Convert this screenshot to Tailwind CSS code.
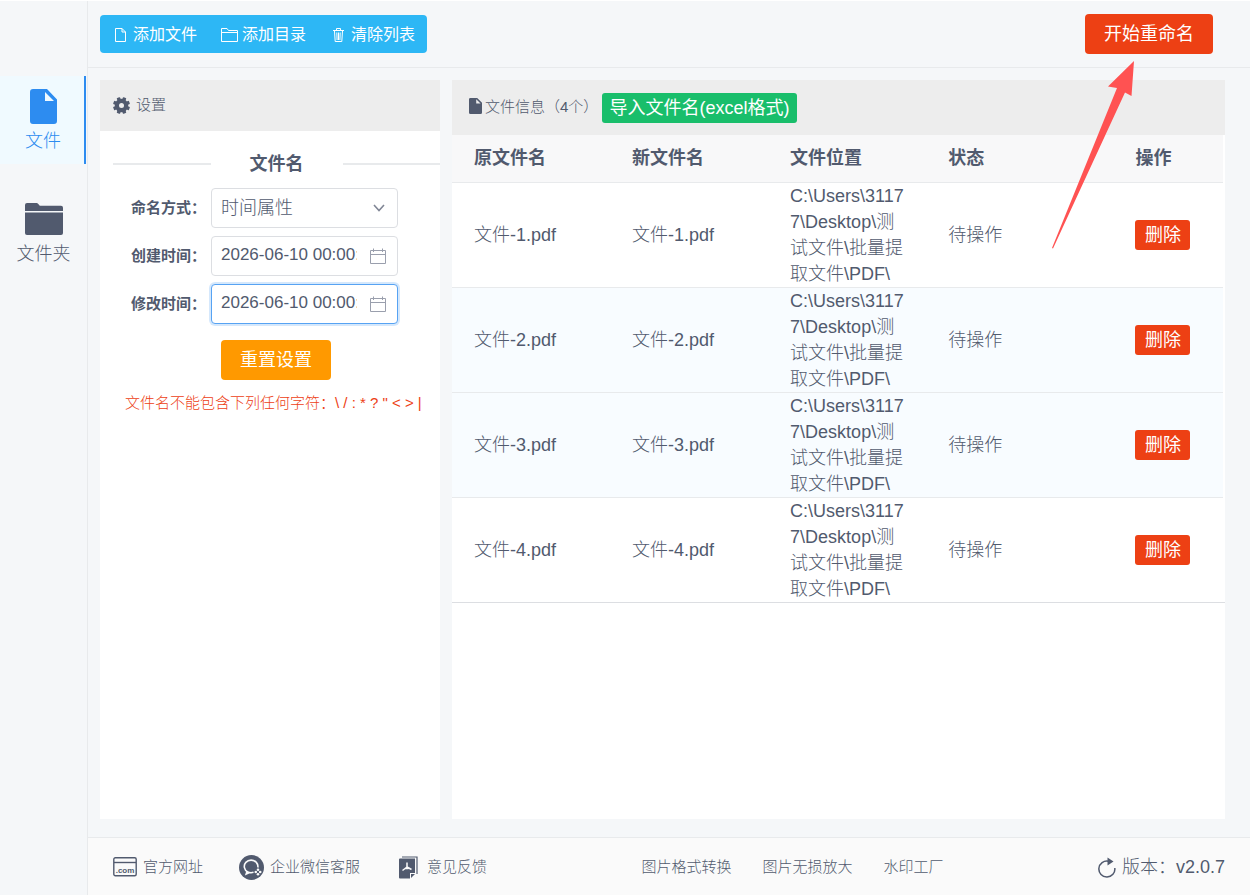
<!DOCTYPE html>
<html lang="zh-CN">
<head>
  <meta charset="UTF-8" />
  <meta name="viewport" content="width=device-width, initial-scale=1.0" />
  <title>文件批量重命名</title>
  <script src="https://cdn.jsdelivr.net/npm/@tailwindcss/browser@4"></script>
</head>
<body class="relative flex min-h-screen bg-[#f5f7f9] font-['Liberation_Sans','Noto_Sans_CJK_SC',sans-serif] font-light text-[#515a6e] border-t border-white">

  <!-- Sidebar -->
  <nav class="flex w-[88px] shrink-0 flex-col gap-[25px] border-r border-[#e8eaec] pt-[75px] text-lg leading-[26px]">
    <a href="#" class="mr-px flex h-[88px] flex-col items-center border-r-2 border-[#2d8cf0] bg-[#f0faff] pl-[2px] pt-[13px] text-[#2d8cf0]">
      <svg class="mb-1 h-[35px] w-[27px]" viewBox="0 0 27 35" fill="currentColor"><path fill-rule="evenodd" d="M3 0H17L27 10.5V32a3 3 0 0 1-3 3H3a3 3 0 0 1-3-3V3a3 3 0 0 1 3-3ZM15 3V12H24Z"/></svg>
      文件
    </a>
    <a href="#" class="flex h-[88px] flex-col items-center pt-[14px]">
      <svg class="mb-[6px] h-8 w-[38px]" viewBox="0 0 38 32" fill="currentColor"><path d="M0 8V2a2 2 0 0 1 2-2H11.5q1 0 1.800 1l1 1.200q.5.600 1.400.600H36a2 2 0 0 1 2 2V8Z"/><path d="M0 9.500H38V30a2 2 0 0 1-2 2H2a2 2 0 0 1-2-2Z"/></svg>
      文件夹
    </a>
  </nav>

  <div class="flex min-w-0 flex-1 flex-col">
    <!-- Toolbar -->
    <header class="flex h-[67px] shrink-0 items-center justify-between border-b border-[#e8eaec] pl-3 pr-[37px]">
      <div class="flex h-[38px] overflow-hidden rounded bg-[#2db7f5] text-base font-normal text-white">
        <button class="flex w-[109px] items-center justify-center gap-[7px] pl-[3px] pt-px">
          <svg class="h-[14px] w-[11px]" viewBox="0 0 11 14" fill="none" stroke="currentColor"><path d="M.5.5H7L10.5 4V13.500H.5ZM7 .5V4H10.5"/></svg>
          添加文件
        </button>
        <button class="flex w-[109px] items-center justify-center gap-1 pt-px">
          <svg class="h-[14px] w-[17px]" viewBox="0 0 17 14" fill="none" stroke="currentColor"><path d="M.5 13.500V.5H6L7.500 2.500H16.500V13.500ZM.5 4.500H16.500"/></svg>
          添加目录
        </button>
        <button class="flex w-[109px] items-center justify-center gap-[7px] pl-[3px] pt-px">
          <svg class="h-[14px] w-[11px]" viewBox="0 0 11 14" fill="none" stroke="currentColor"><path d="M0 2.500H11M3.500 2V.5H7.500V2M1.500 3L2.200 13.500H8.800L9.500 3M3.800 4.500L4.100 12M5.500 4.500V12M7.200 4.500L6.900 12"/></svg>
          清除列表
        </button>
      </div>
      <button class="h-10 w-32 rounded bg-[#ed4014] text-lg font-normal text-white">开始重命名</button>
    </header>

    <main class="flex flex-1 gap-3 pb-[18px] pl-3 pr-[25px] pt-3">
      <!-- Settings -->
      <section class="w-[340px] shrink-0 bg-white">
        <h2 class="flex h-[51px] items-center gap-[6px] bg-[#ededed] pl-[13px] text-[15px] font-light">
          <svg class="size-[17px]" viewBox="0 0 17 17"><g fill="currentColor"><circle cx="8.500" cy="8.500" r="6.700"/><rect x="6.700" y="0" width="3.600" height="17" rx=".8" transform="rotate(22.500 8.500 8.500)"/><rect x="6.700" y="0" width="3.600" height="17" rx=".8" transform="rotate(67.500 8.500 8.500)"/><rect x="6.700" y="0" width="3.600" height="17" rx=".8" transform="rotate(112.500 8.500 8.500)"/><rect x="6.700" y="0" width="3.600" height="17" rx=".8" transform="rotate(157.500 8.500 8.500)"/></g><circle cx="8.500" cy="8.500" r="2.500" fill="#ededed"/></svg>
          设置
        </h2>
        <div class="ml-[13px] mt-5 flex items-center gap-[39px] text-lg leading-[26px] font-bold">
          <span class="h-[2px] flex-1 bg-[#e8eaec]"></span>
          文件名
          <span class="h-[2px] flex-1 bg-[#e8eaec]"></span>
        </div>
        <form class="mt-[11px] flex flex-col gap-2">
          <div class="flex items-center">
            <label for="mode" class="w-[111px] pr-[5px] text-right text-[15px] font-bold">命名方式：</label>
            <div class="relative w-[187px]">
              <select id="mode" class="h-10 w-full appearance-none rounded border border-[#dcdee2] bg-white px-[9px] text-lg leading-[26px] outline-none">
                <option>时间属性</option>
              </select>
              <svg class="pointer-events-none absolute right-[13px] top-4 h-2 w-3" viewBox="0 0 12 8" fill="none" stroke="#808695" stroke-width="1.600"><path d="M1 1L6 6.500L11 1"/></svg>
            </div>
          </div>
          <div class="flex items-center">
            <label for="created" class="w-[111px] pr-[5px] text-right text-[15px] font-bold">创建时间：</label>
            <div class="relative w-[187px]">
              <input id="created" type="text" value="2026-06-10 00:00:00" class="h-10 w-full rounded border border-[#dcdee2] bg-white pb-[2px] pl-[9px] pr-10 text-[17px] outline-none" />
              <svg class="pointer-events-none absolute right-3 top-3 h-4 w-4" viewBox="0 0 16 16" fill="none" stroke="#9a9fad"><path d="M.5 2.500H15.500V15.500H.5ZM.5 6.500H15.500M3.500 .5V4M12.500 .5V4"/></svg>
            </div>
          </div>
          <div class="flex items-center">
            <label for="modified" class="w-[111px] pr-[5px] text-right text-[15px] font-bold">修改时间：</label>
            <div class="relative w-[187px]">
              <input id="modified" type="text" value="2026-06-10 00:00:00" class="h-10 w-full rounded border border-[#57a3f3] bg-white pb-[2px] pl-[9px] pr-10 text-[17px] shadow-[0_0_0_2px_rgba(45,140,240,0.2)] outline-none" />
              <svg class="pointer-events-none absolute right-3 top-3 h-4 w-4" viewBox="0 0 16 16" fill="none" stroke="#9a9fad"><path d="M.5 2.500H15.500V15.500H.5ZM.5 6.500H15.500M3.500 .5V4M12.500 .5V4"/></svg>
            </div>
          </div>
          <button type="button" class="ml-[121px] mt-2 h-10 w-[110px] rounded bg-[#ff9900] text-lg font-normal text-white">重置设置</button>
        </form>
        <p class="mt-3 pl-[25px] text-[15px] leading-[22px] text-[#ed4014]">文件名不能包含下列任何字符：\ / : * ? " &lt; &gt; |</p>
      </section>

      <!-- File list -->
      <section class="min-w-0 flex-1 bg-white">
        <div class="flex h-[55px] items-center bg-[#ededed] pl-[17px]">
          <svg class="mb-1 mr-[3px] h-4 w-[13px]" viewBox="0 0 27 35" fill="currentColor" preserveAspectRatio="none"><path fill-rule="evenodd" d="M3 0H17L27 10.5V32a3 3 0 0 1-3 3H3a3 3 0 0 1-3-3V3a3 3 0 0 1 3-3ZM15 3V12H24Z"/></svg>
          <h2 class="w-[117px] whitespace-nowrap text-[15px] font-light">文件信息（4个）</h2>
          <button class="h-[30px] w-[195px] whitespace-nowrap rounded-[3px] bg-[#19be6b] text-lg leading-[26px] font-normal text-white">导入文件名(excel格式)</button>
        </div>
        <div class="border-b border-[#dcdee2] pr-[2px]">
          <table class="w-full table-fixed text-left text-lg leading-[26px]">
            <thead>
              <tr class="h-[47px] border-b border-[#e8eaec] bg-[#f8f8f9]">
                <th class="w-[20.5%] pl-[22px] font-bold">原文件名</th>
                <th class="w-[20.5%] pl-[22px] font-bold">新文件名</th>
                <th class="w-[20.5%] pl-[22px] font-bold">文件位置</th>
                <th class="w-[24.3%] pl-[22px] font-bold">状态</th>
                <th class="pl-[22px] font-bold">操作</th>
              </tr>
            </thead>
            <tbody id="files"></tbody>
          </table>
        </div>
      </section>
    </main>

    <!-- Footer -->
    <footer class="flex h-[58px] shrink-0 items-center justify-between border-t border-[#e8eaec] bg-[#fafafa] px-[25px] pt-px text-[15px]">
      <div class="flex items-center gap-9">
        <a href="#" class="flex items-center gap-[6px]">
          <svg class="h-5 w-6" viewBox="0 0 24 20"><rect x=".8" y=".8" width="22.400" height="18" rx="1.500" fill="none" stroke="currentColor" stroke-width="1.400"/><path d="M1 5.500H23" stroke="currentColor" stroke-width="1.400"/><text x="12" y="16" text-anchor="middle" font-size="8" font-weight="bold" fill="currentColor">.com</text></svg>
          官方网址
        </a>
        <a href="#" class="flex items-center gap-[6px]">
          <svg class="size-[25px]" viewBox="0 0 25 25"><circle cx="12.500" cy="12.500" r="12.500" fill="currentColor"/><path d="M18.800 12.500A6.800 6.300 0 1 0 14.500 17.300M8 16.500L7.200 19L10.500 17.500" fill="none" stroke="#fafafa" stroke-width="1.600"/><g fill="#fafafa"><circle cx="19" cy="14.800" r="1.300"/><circle cx="21.200" cy="17" r="1.300"/><circle cx="19" cy="19.200" r="1.300"/><circle cx="16.800" cy="17" r="1.300"/></g></svg>
          企业微信客服
        </a>
        <a href="#" class="ml-[3px] flex items-center gap-[9px]">
          <svg class="h-[23px] w-[19px]" viewBox="0 0 19 23"><path d="M3 1H18V18" fill="none" stroke="currentColor" stroke-width="1.200"/><path d="M1 2.500H16V17H11V22.500H1a1 1 0 0 1-1-1V3.500a1 1 0 0 1 1-1ZM12 18H16L12 22Z" fill="currentColor"/><path d="M8 6.500V11L3.500 14.500M8 11L12.500 13.500M6.500 12.500H9.500" fill="none" stroke="#fafafa" stroke-width="1.500"/></svg>
          意见反馈
        </a>
      </div>
      <div class="flex items-center gap-[31px]">
        <a href="#">图片格式转换</a>
        <a href="#">图片无损放大</a>
        <a href="#">水印工厂</a>
      </div>
      <div class="flex items-center gap-[6px] text-lg">
        <svg class="h-[21px] w-[18px]" viewBox="0 0 18 21" fill="none" stroke="currentColor" stroke-width="1.500"><path d="M10.500 4.200A8 8 0 1 0 16.800 11"/><path d="M9.500 .5L15.500 4.500L9.500 8.500Z" fill="currentColor" stroke="none"/></svg>
        <span>版本：v2.0.7</span>
      </div>
    </footer>
  </div>

  <!-- Arrow pointing at the start button -->
  <svg class="pointer-events-none absolute right-[115px] top-[60px] h-[188px] w-[83px]" viewBox="0 0 83 188"><path d="M82 0L79.500 35L73 31.500L1 187.500L0 187L65 27L56 25.500Z" fill="#ff5252"/></svg>

  <script>
    const files = ["文件-1.pdf", "文件-2.pdf", "文件-3.pdf", "文件-4.pdf"];
    const path = "C:\\Users\\31177\\Desktop\\测试文件\\批量提取文件\\PDF\\";

    document.getElementById("files").innerHTML = files.map((name, i) => `
      <tr class="h-[105px] border-b border-[#e8eaec] last:border-b-0 last:h-[104px] ${i === 1 || i === 2 ? 'bg-[#f8fcff]' : ''}">
        <td class="pl-[22px]">${name}</td>
        <td class="pl-[22px]">${name}</td>
        <td class="pl-[22px] pr-4 break-all">${path}</td>
        <td class="pl-[22px]">待操作</td>
        <td class="pl-[22px]"><button class="h-[30px] w-[55px] rounded-[3px] bg-[#ed4014] font-normal text-white">删除</button></td>
      </tr>`).join('');
  </script>
</body>
</html>
